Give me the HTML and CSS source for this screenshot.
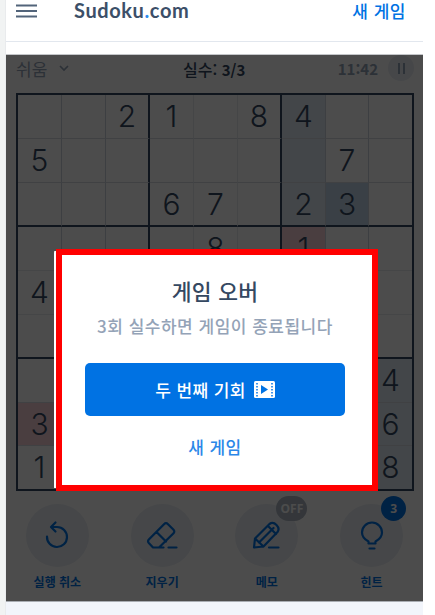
FILE: index.html
```html
<!DOCTYPE html>
<html lang="ko">
<head>
<meta charset="utf-8">
<title>Sudoku.com</title>
<link rel="stylesheet" href="styles.css">
</head>
<body>
<div class="page">
  <header class="header">
    <svg class="menu" width="22" height="14" viewBox="0 0 22 14"><path d="M0 1.500h21M0 7h21M0 12.500h21"/></svg>
    <div class="logo">Sudoku<span>.</span>com</div>
    <a class="new-link">새 게임</a>
  </header>
  <main class="game">
    <div class="status">
      <span class="level">쉬움</span>
      <svg class="chevron" width="10" height="7" viewBox="0 0 10 7"><path d="M1 1l4 4 4-4"/></svg>
      <span class="mistakes">실수: <b>3/3</b></span>
      <span class="time">11:42</span>
      <span class="pause"><i></i><i></i></span>
    </div>
    <div class="board" id="board"></div>
    <div class="tools">
      <div class="tool"><div class="disc"><svg width="32" height="32" viewBox="0 0 32 32"><path d="M6 16.500A10 10 0 1 0 16 7H10.500M14.500 2.500L10 7l4.500 4.500"/></svg></div><span>실행 취소</span></div>
      <div class="tool"><div class="disc"><svg width="32" height="32" viewBox="0 0 32 32"><path d="M7 27.500L2.800 23q-1.500-1.700 0-3.400L18 4.200q2-2 4 0l5.300 5.300q2 2 0 4L13 27.500zM10.500 12l9.500 9.500M7 27.500h10.500M22.500 27.500h8"/></svg></div><span>지우기</span></div>
      <div class="tool"><div class="disc"><svg width="32" height="32" viewBox="0 0 32 32"><path d="M3 27.500l1-9L18.500 4q3.500-2.500 7 1t1 7L12.500 26.500zM4 18.500l8.500 8M8 22.500L22.500 8M17 6l8 8M18 27.500h9.500"/></svg><b class="badge off">OFF</b></div><span>메모</span></div>
      <div class="tool"><div class="disc"><svg width="32" height="32" viewBox="0 0 32 32"><path d="M12.500 23.500v-2q-6.500-3.500-6.500-9a10 10 0 0 1 20 0q0 5.500-6.500 9v2zM13.500 28.500h5"/></svg><b class="badge count">3</b></div><span>힌트</span></div>
    </div>
    <div class="shade"></div>
    <div class="dialog">
      <div class="frame">
        <h1>게임 오버</h1>
        <p>3회 실수하면 게임이 종료됩니다</p>
        <button class="chance">두 번째 기회
          <svg width="21" height="17" viewBox="0 0 21 17"><rect width="21" height="17" rx="1.500" fill="#fff"/><path d="M3 2v14M18 2v14" stroke="#0072e3" stroke-width="1.500" stroke-dasharray="1.500 1.500"/><path d="M7 4v9l7-4.500z" fill="#0072e3"/></svg>
        </button>
        <a class="again">새 게임</a>
      </div>
    </div>
  </main>
</div>
<script src="board.js"></script>
</body>
</html>
```
FILE: styles.css
```css
* { box-sizing: border-box; }
body {
  margin: 0;
  height: 615px;
  overflow: hidden;
  background: linear-gradient(90deg, #f1f3f3 5px, #e9ebed 5px 6px, #fff 6px);
  font-family: "Noto Sans CJK KR", sans-serif;
  color: #344861;
}
.page { width: 417px; height: 615px; margin-left: 6px; background: #f2f5fb; }
.header {
  height: 42px;
  background: #fff;
  border-bottom: 1px solid #e2e7ee;
  box-shadow: 0 13px #fff;
  display: flex;
  align-items: flex-start;
  padding: 0 17px 0 10px;
}
.menu { margin-top: 4px; fill: none; stroke: #52647a; stroke-width: 1.8; }
.logo {
  margin-left: 36px;
  font: 700 20px/20px Lato, sans-serif;
  letter-spacing: .6px;
  color: #3c4f68;
}
.logo span { color: #2b8cf0; }
.new-link { margin-left: auto; font-size: 17px; font-weight: 500; line-height: 21px; letter-spacing: .5px; color: #0072e3; }

.game {
  position: relative;
  height: 547px;
  margin-top: 13px;
  background: #fff;
  border-bottom: 1px solid #a9adb3;
  box-shadow: 0 -1px #c4c6c9;
}
.status { height: 38px; display: flex; align-items: flex-start; padding: 0 9px 0 10px; font-size: 15px; line-height: 27px; }
.level { width: 34px; font-size: 17px; color: #94a3b7; }
.chevron { margin: 10px 0 0 9px; fill: none; stroke: #94a3b7; stroke-width: 1.7; }
.mistakes { margin: 1px 0 0 114px; width: 72px; font-size: 16px; font-weight: 500; white-space: nowrap; color: #344861; }
.mistakes b { font-size: 15px; }
.time { margin-left: auto; margin-right: 10px; font-weight: 700; color: #94a3b7; }
.pause { width: 26px; height: 26px; border-radius: 50%; background: #eaeef4; display: flex; justify-content: center; align-items: center; gap: 3px; }
.pause i { width: 2px; height: 11px; background: #94a3b7; }

.board {
  width: 398px;
  height: 398px;
  margin-left: 10px;
  border: 2px solid #344861;
  display: grid;
  grid-template-columns: repeat(7, 44px) 43px 43px;
  grid-template-rows: repeat(7, 44px) 43px 43px;
}
.cell {
  border-right: 1px solid #cbd2dc;
  border-bottom: 1px solid #d5dae2;
  font: 300 30px/43px Inter, sans-serif;
  text-align: center;
}
.cell:nth-child(9n+4), .cell:nth-child(9n+5) { border-right-color: #e8ebef; }
.cell:nth-child(9n) { border-right: 0; }
.cell:nth-child(n+73) { border-bottom: 0; }
.cell:nth-child(9n+3), .cell:nth-child(9n+6) { border-right: 2px solid #344861; }
.cell:nth-child(n+28):nth-child(-n+45) { border-bottom-color: #e8ebef; }
.cell:nth-child(n+19):nth-child(-n+27), .cell:nth-child(n+46):nth-child(-n+54) { border-bottom: 2px solid #344861; }
.cell.near { background: #e2ebf3; }
.cell.same { background: #c3d7ea; }
.cell.error { background: #f7cfd6; }

.tools { margin: 13px 0 0 -1px; display: grid; grid-template-columns: repeat(4, 104.75px); }
.tool { display: flex; flex-direction: column; align-items: center; font-size: 12px; font-weight: 700; line-height: 18px; color: #0072e3; }
.disc { position: relative; width: 63px; height: 63px; margin-bottom: 6px; border-radius: 50%; background: #eaeef4; display: flex; justify-content: center; align-items: center; }
.disc svg { fill: none; stroke: #0072e3; stroke-width: 2.2; stroke-linejoin: round; stroke-linecap: round; }
.badge { position: absolute; top: -8px; height: 25px; border-radius: 13px; color: #fff; text-align: center; font: 700 12px/25px "Open Sans", sans-serif; }
.off { left: 41px; width: 31px; background: #adb6c2; }
.count { left: 41px; width: 25px; background: #0072e3; }

.shade { position: absolute; inset: 0; background: rgba(0, 0, 0, .7); }
.dialog {
  position: absolute;
  left: 48px;
  top: 194px;
  width: 324px;
  height: 242px;
  padding-left: 2px;
  background: linear-gradient(#fff, #fff) 0 2px / 100% 237px no-repeat;
  border-radius: 4px;
}
.frame { height: 242px; padding-right: 4px; border: 6px solid #f00; background: #fff; display: flex; flex-direction: column; align-items: center; }
h1 { margin: 20px 0 0; font-size: 21.5px; line-height: 32px; font-weight: 500; color: #344861; letter-spacing: .3px; }
p { margin: 7px 0 0; font-size: 17px; font-weight: 500; line-height: 24px; letter-spacing: .5px; color: #94a3b7; white-space: nowrap; }
.chance {
  width: 260px;
  height: 53px;
  margin: 25px 0 0;
  padding: 0;
  border: 0;
  border-radius: 5px;
  background: #0072e3;
  color: #fff;
  font: 500 17px/24px "Noto Sans CJK KR", sans-serif;
  letter-spacing: .4px;
  display: flex;
  align-items: center;
  justify-content: center;
  gap: 8px;
}
.again { margin-top: 19px; font-size: 17px; font-weight: 500; line-height: 24px; letter-spacing: .4px; color: #2b87e8; }
```
FILE: board.js
```js
const rows = [
  "..21.84..", "5......7.", "...67.23.",
  "....8.1..", "4........", ".........",
  "........4", "3.......6", "1.......8"
];
const near = [6, 15, 24, 60, 61, 62, 69, 70, 71, 78, 79, 80];
const error = [33, 63];
const board = document.getElementById("board");
rows.join("").split("").forEach((value, i) => {
  const cell = document.createElement("div");
  cell.className = "cell";
  if (near.includes(i)) cell.classList.add("near");
  if (error.includes(i)) cell.classList.add("error");
  if (i === 25) cell.classList.add("same");
  cell.textContent = value === "." ? "" : value;
  board.append(cell);
});
```
